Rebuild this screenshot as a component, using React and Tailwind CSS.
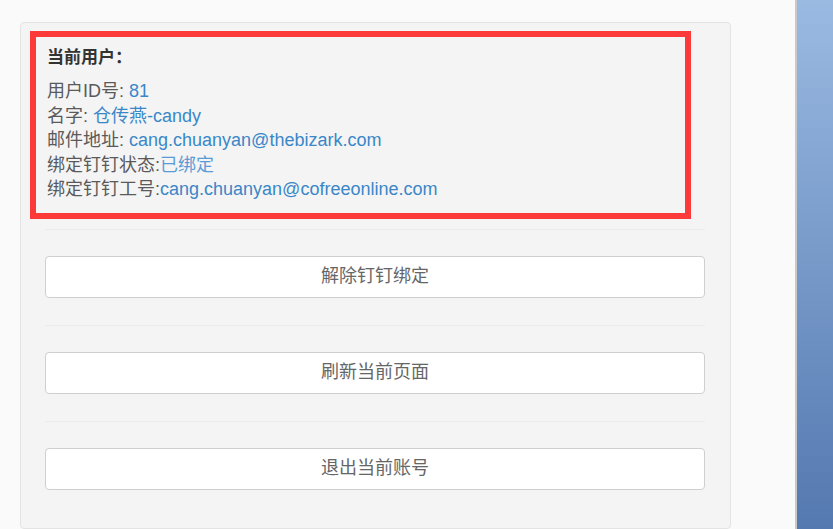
const FONT = { fontFamily: '"Liberation Sans", "Noto Sans CJK SC", sans-serif' };

function InfoLine({ label, value, light }) {
  return (
    <div className="leading-[24.5px] text-[18px] text-[#5a5a5a] whitespace-nowrap">
      {label}
      <span className={light ? 'text-[#5b9bd5]' : 'text-[#3a87c8]'}>{value}</span>
    </div>
  );
}

function ActionButton({ children }) {
  return (
    <button className="w-full h-[42px] bg-white border border-[#cfcfcf] rounded-[4px] text-[18px] text-[#666]">
      {children}
    </button>
  );
}

export default function App() {
  return (
    <div className="flex w-[833px] h-[529px] overflow-hidden bg-[#fafafa]" style={FONT}>
      <div className="flex-1 pl-[20px] pt-[22px]">
        <div className="w-[711px] h-[507px] bg-[#f4f4f4] border border-[#e3e3e3] rounded-[4px] pt-[8px] pl-[9px] pr-[24px]">
          {/* user info, outlined in red */}
          <div className="w-[661px] border-[6px] border-[#fd3a3a] pl-[11px] pt-[9px] pb-[11px]">
            <div className="text-[17px] leading-[24px] font-bold text-[#333]">当前用户：</div>
            <div className="mt-[9px]">
              <InfoLine label="用户ID号: " value="81" />
              <InfoLine label="名字: " value="仓传燕-candy" />
              <InfoLine label="邮件地址: " value="cang.chuanyan@thebizark.com" />
              <InfoLine label="绑定钉钉状态:" value="已绑定" light />
              <InfoLine label="绑定钉钉工号:" value="cang.chuanyan@cofreeonline.com" />
            </div>
          </div>

          <div className="pl-[15px] pr-[1px]">
            <div className="mt-[10px] border-t border-[#ebebeb]" />
            <div className="mt-[26px]">
              <ActionButton>解除钉钉绑定</ActionButton>
            </div>
            <div className="mt-[27px] border-t border-[#ebebeb]" />
            <div className="mt-[26px]">
              <ActionButton>刷新当前页面</ActionButton>
            </div>
            <div className="mt-[27px] border-t border-[#ebebeb]" />
            <div className="mt-[26px]">
              <ActionButton>退出当前账号</ActionButton>
            </div>
          </div>
        </div>
      </div>
      <div className="w-[38px] h-full border-l-2 border-[#c9c9c9] bg-gradient-to-b from-[#9bbae2] to-[#5479b0]" />
    </div>
  );
}
